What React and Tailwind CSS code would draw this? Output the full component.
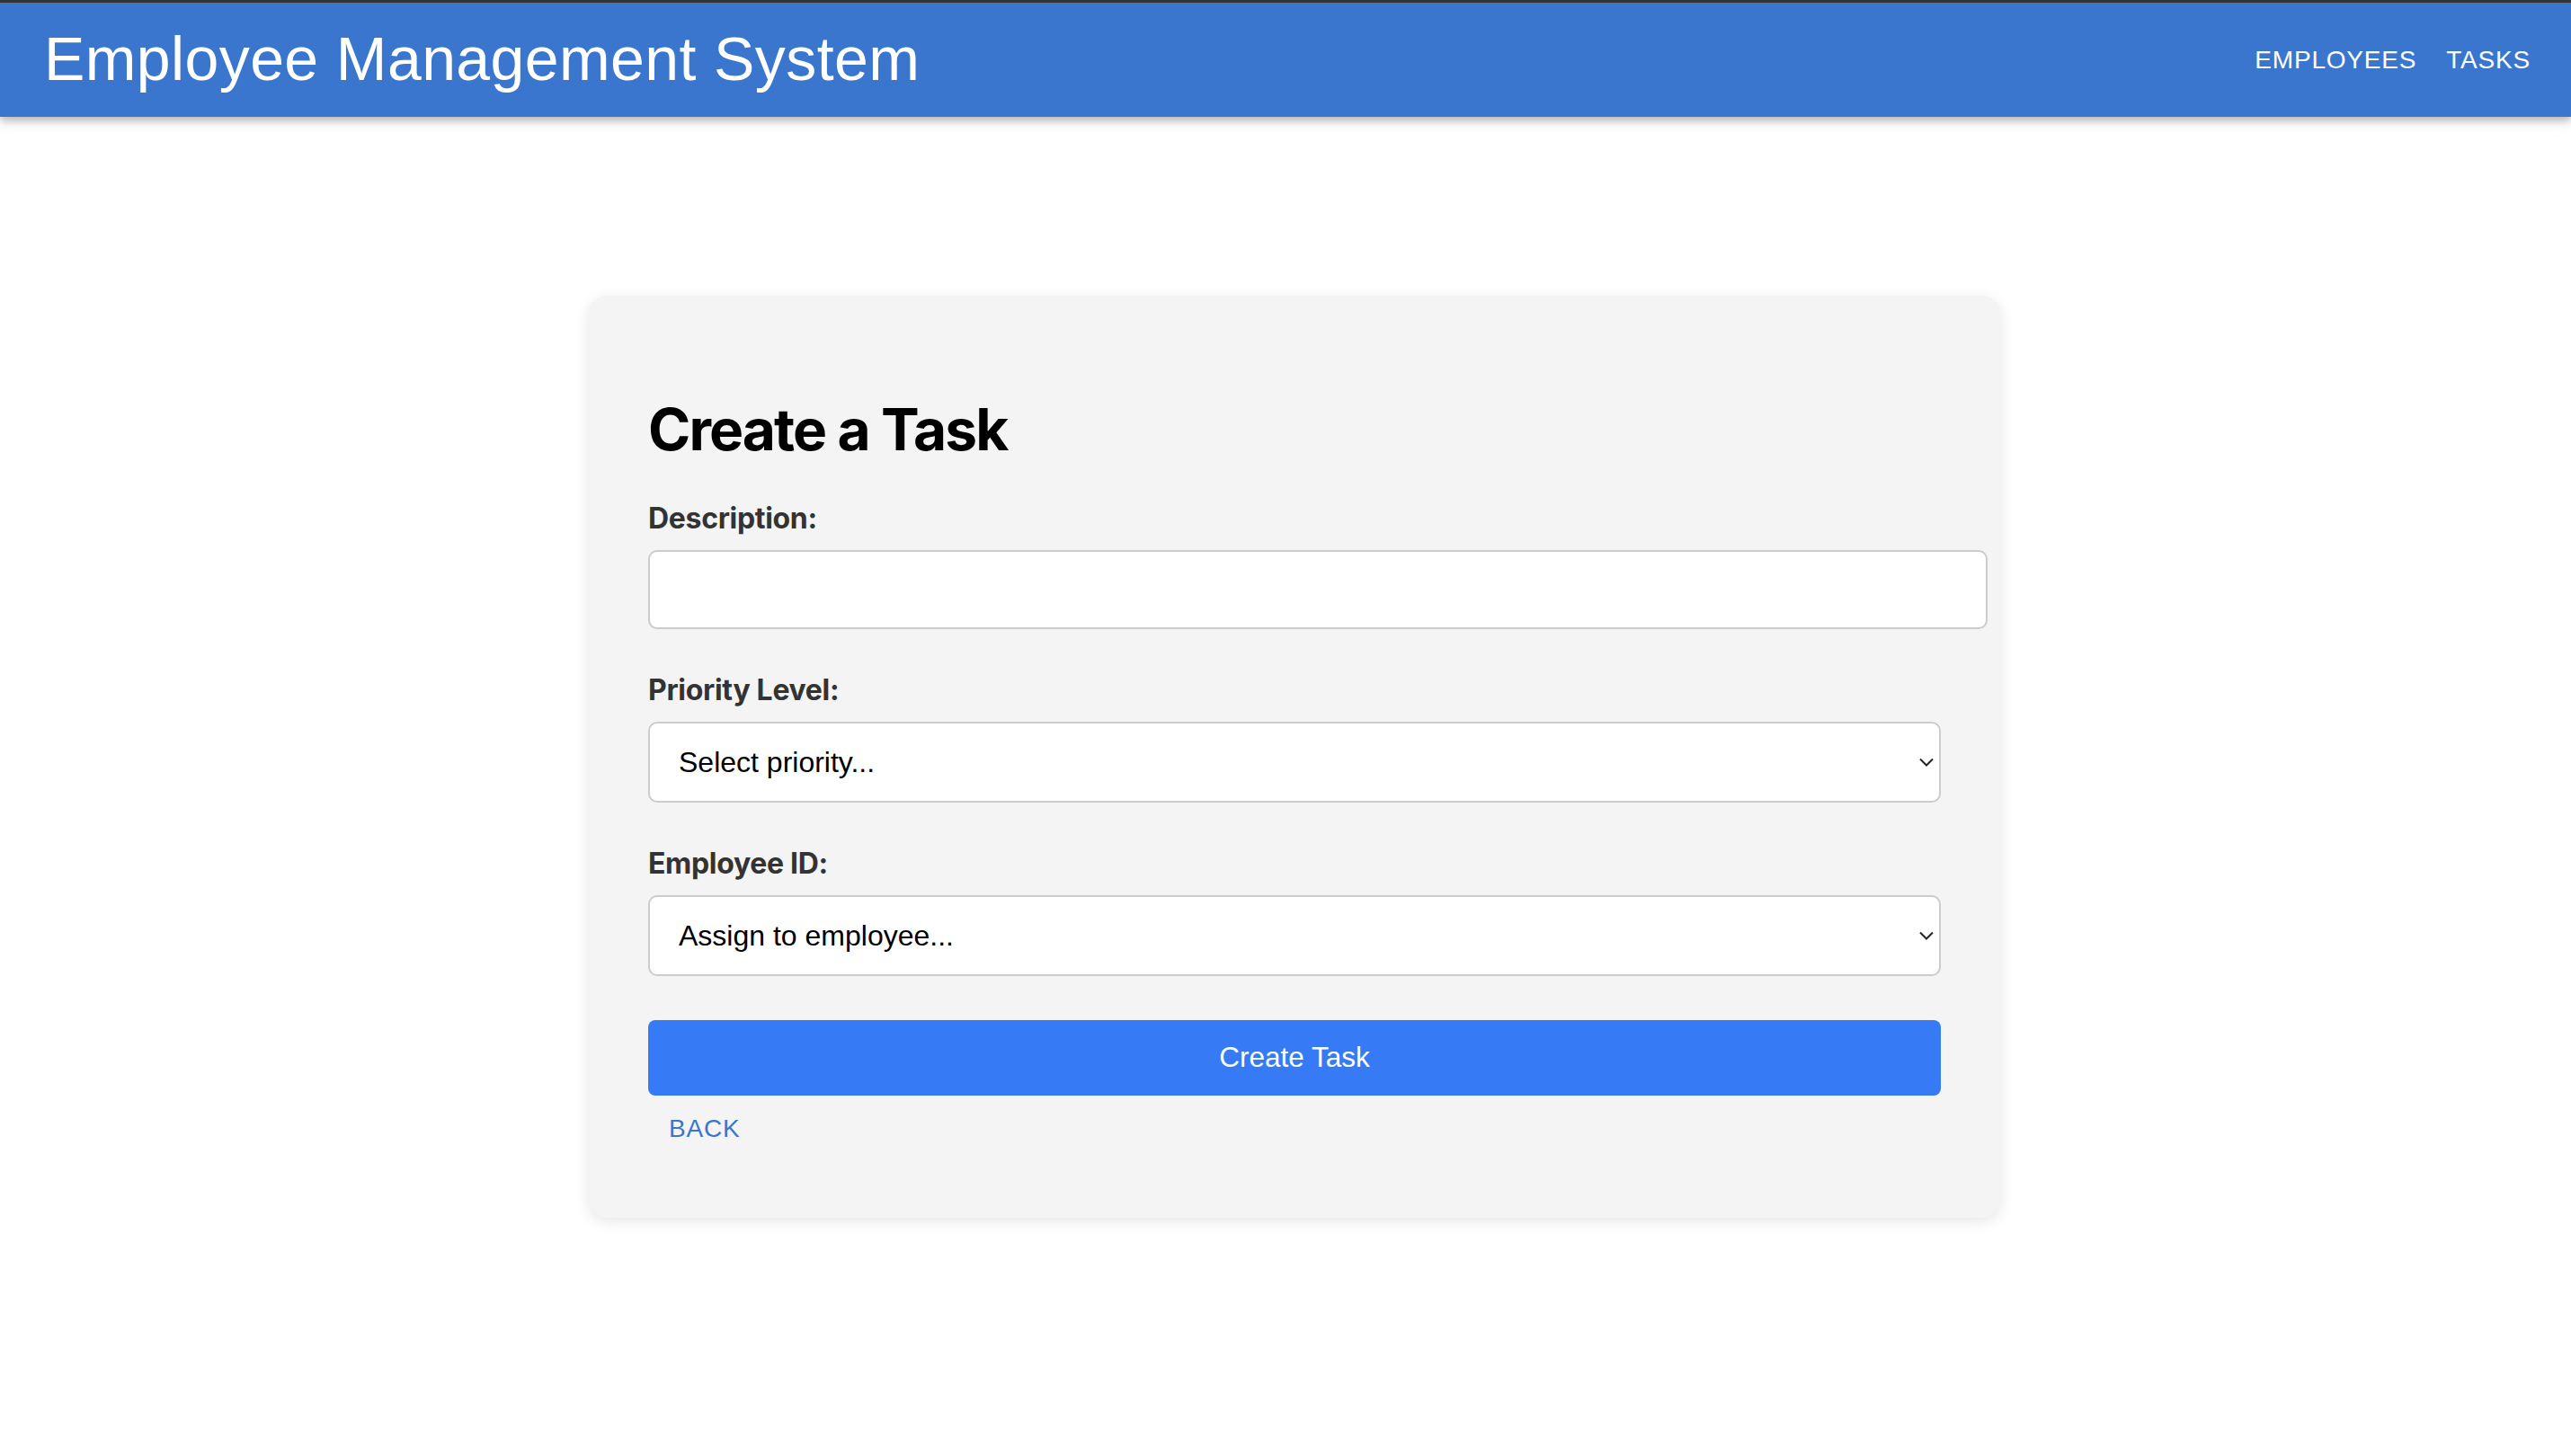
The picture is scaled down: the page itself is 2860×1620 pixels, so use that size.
import React from "react";

const sans = { fontFamily: '"Liberation Sans", Arial, sans-serif' };

const Chevron = () => (
  <svg
    className="pointer-events-none absolute right-[8px] top-1/2 -translate-y-1/2"
    width="16"
    height="10"
    viewBox="0 0 16 10"
    fill="none"
  >
    <path d="M1 1.5 L8 8.5 L15 1.5" stroke="#222" strokeWidth="2" />
  </svg>
);

const Select = ({ placeholder }) => (
  <div className="relative">
    <select
      defaultValue=""
      className="h-[90px] w-full appearance-none rounded-[10px] border-2 border-[#cccccc] bg-white pl-[32px] text-[32px] text-black outline-none font-['Liberation_Sans',Arial,sans-serif]"
    >
      <option value="" disabled>
        {placeholder}
      </option>
    </select>
    <Chevron />
  </div>
);

const Label = ({ children, className }) => (
  <label className={`block font-['Inter',sans-serif] text-[32px] font-bold leading-[32px] tracking-[-0.01em] text-[#333333] ${className}`}>
    {children}
  </label>
);

const App = () => {
  return (
    <div className="min-h-screen bg-white">
      {/* App bar */}
      <header className="relative z-10 shadow-[0_4px_8px_rgba(0,0,0,0.22),0_8px_12px_rgba(0,0,0,0.08)]">
        <div className="h-[3px] bg-[#333333]" />
        <div className="flex h-[127px] items-center justify-between bg-[#3a76ce] pl-[49px] pr-[29px]" style={sans}>
          <h1 className="pb-[4px] text-[68px] leading-none tracking-[0.4px] text-white">
            Employee Management System
          </h1>
          <nav className="flex items-center">
            <button className="px-[16px] text-[28px] leading-none tracking-[0.8px] text-white">EMPLOYEES</button>
            <button className="ml-[1px] px-[16px] text-[28px] leading-none tracking-[0.8px] text-white">TASKS</button>
          </nav>
        </div>
      </header>

      {/* Form card */}
      <div className="ml-[655px] mt-[199px] w-[1570px] rounded-[20px] bg-[#f4f4f4] px-[66px] pb-[85px] pt-[117px] shadow-[0_4px_16px_rgba(0,0,0,0.1)]">
        <h2 className="font-['Inter',sans-serif] text-[64px] font-bold leading-[64px] tracking-[-0.03em] text-black">
          Create a Task
        </h2>

        <Label className="mt-[51px]">Description:</Label>
        <input
          type="text"
          className="mt-[19px] box-content block h-[36px] w-full rounded-[10px] border-2 border-[#cccccc] bg-white px-[24px] py-[24px] text-[31px] outline-none"
          style={sans}
        />

        <Label className="mt-[52px]">Priority Level:</Label>
        <div className="mt-[19px]">
          <Select placeholder="Select priority..." />
        </div>

        <Label className="mt-[52px]">Employee ID:</Label>
        <div className="mt-[19px]">
          <Select placeholder="Assign to employee..." />
        </div>

        <button
          className="mt-[49px] block h-[84px] w-full rounded-[8px] bg-[#367bf5] text-[31.5px] text-white"
          style={sans}
        >
          Create Task
        </button>

        <button
          className="ml-[23px] mt-[23px] block text-[28px] leading-[28px] tracking-[0.8px] text-[#3a76ce]"
          style={sans}
        >
          BACK
        </button>
      </div>
    </div>
  );
};

export default App;
